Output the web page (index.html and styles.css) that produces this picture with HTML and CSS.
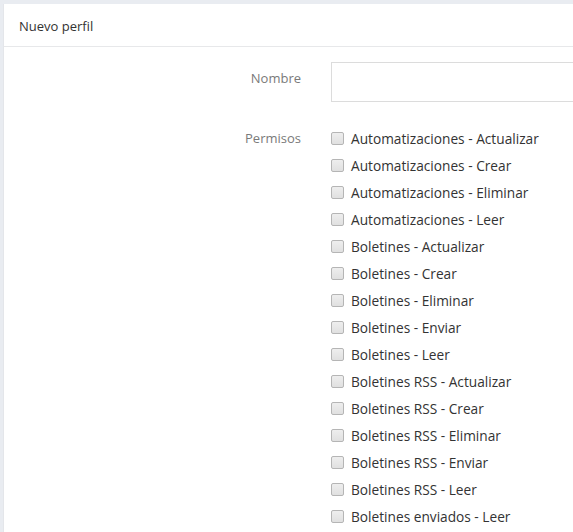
FILE: index.html
```html
<!DOCTYPE html>
<html lang="es">
<head>
<meta charset="utf-8">
<title>Nuevo perfil</title>
<link rel="stylesheet" href="styles.css">
</head>
<body>
<div class="card">
  <div class="card-header">Nuevo perfil</div>
  <div class="card-body">
    <div class="row row-name">
      <label class="label">Nombre</label>
      <div class="field"><input class="input" type="text"></div>
    </div>
    <div class="row row-perms">
      <div class="label">Permisos</div>
      <ul class="checks">
        <li><span class="box"></span>Automatizaciones - Actualizar</li>
        <li><span class="box"></span>Automatizaciones - Crear</li>
        <li><span class="box"></span>Automatizaciones - Eliminar</li>
        <li><span class="box"></span>Automatizaciones - Leer</li>
        <li><span class="box"></span>Boletines - Actualizar</li>
        <li><span class="box"></span>Boletines - Crear</li>
        <li><span class="box"></span>Boletines - Eliminar</li>
        <li><span class="box"></span>Boletines - Enviar</li>
        <li><span class="box"></span>Boletines - Leer</li>
        <li><span class="box"></span>Boletines RSS - Actualizar</li>
        <li><span class="box"></span>Boletines RSS - Crear</li>
        <li><span class="box"></span>Boletines RSS - Eliminar</li>
        <li><span class="box"></span>Boletines RSS - Enviar</li>
        <li><span class="box"></span>Boletines RSS - Leer</li>
        <li><span class="box"></span>Boletines enviados - Leer</li>
      </ul>
    </div>
  </div>
</div>
</body>
</html>
```
FILE: styles.css
```css
html, body {
  margin: 0;
  padding: 0;
  background: #e9ecf1;
  overflow: hidden;
  height: 532px;
}
body {
  font-family: "Open Sans", "Liberation Sans", sans-serif;
  font-size: 13px;
  color: #333;
  padding: 4px 0 0 3px;
}
.card {
  background: #fff;
  border-left: 1px solid #e4e6ea;
  width: 620px;
  min-height: 600px;
}
.card-header {
  height: 42px;
  line-height: 44px;
  padding: 0 15px;
  border-bottom: 1px solid #e7e8ea;
  color: #333;
}
.card-body {
  padding-top: 15px;
}
.row {
  display: grid;
  grid-template-columns: 297px 1fr;
  column-gap: 30px;
}
.label {
  text-align: right;
  color: #7a7a7a;
}
.row-name .label {
  padding-top: 7px;
}
.input {
  display: block;
  box-sizing: border-box;
  width: 300px;
  height: 40px;
  border: 1px solid #dcdcdc;
  margin: 0;
  padding: 0 10px;
  font: inherit;
}
.row-perms {
  margin-top: 23px;
}
.row-perms .label {
  padding-top: 4px;
}
.checks {
  list-style: none;
  margin: 0;
  padding: 0;
}
.checks li {
  display: flex;
  align-items: center;
  height: 27px;
  font-size: 13.7px;
  color: #333;
}
.box {
  box-sizing: border-box;
  width: 13px;
  height: 13px;
  border: 1px solid #b5b5b5;
  border-radius: 2px;
  background: linear-gradient(#eeeeee, #e0e0e0);
  margin-right: 7px;
  flex: none;
}
```
